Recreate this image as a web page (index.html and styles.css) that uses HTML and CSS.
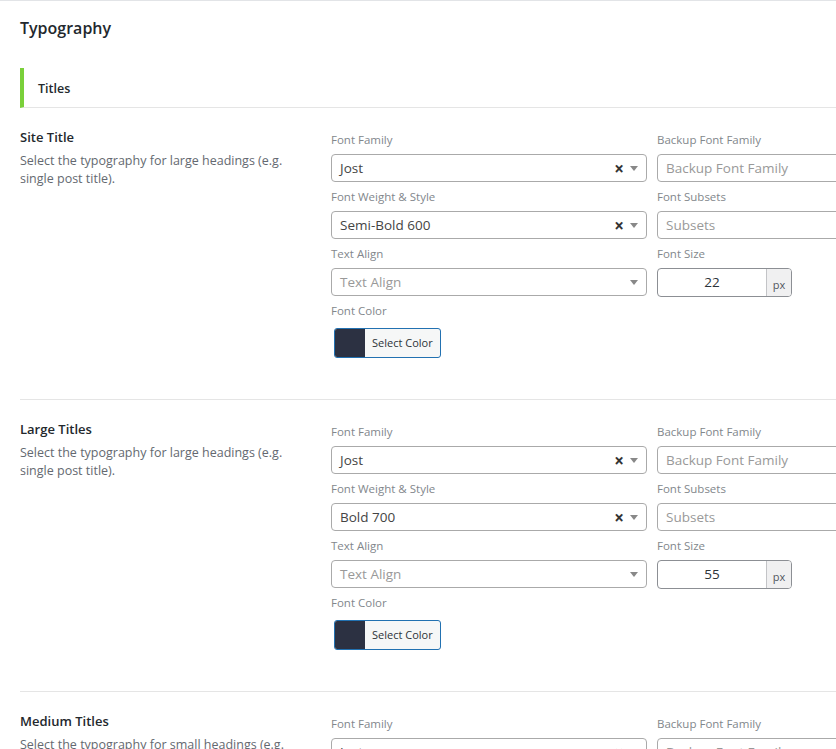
FILE: index.html
```html
<!DOCTYPE html>
<html lang="en">
<head>
<meta charset="UTF-8">
<meta name="viewport" content="width=device-width, initial-scale=1.0">
<title>Typography</title>
<link rel="stylesheet" href="styles.css">
</head>
<body>

<div class="page">
    <h2 class="page-title">Typography</h2>

    <div class="group-head">Titles</div>

    <div class="setting">
        <div class="setting-info">
            <h3>Site Title</h3>
            <p>Select the typography for large headings (e.g. single post title).</p>
        </div>
        <div class="setting-fields">
            <div class="field">
                <label>Font Family</label>
                <div class="select">
                    <span class="value">Jost</span>
                    <span class="clear">&times;</span>
                    <span class="arrow"></span>
                </div>
            </div>
            <div class="field">
                <label>Backup Font Family</label>
                <div class="select">
                    <span class="value placeholder">Backup Font Family</span>
                </div>
            </div>
            <div class="field">
                <label>Font Weight &amp; Style</label>
                <div class="select">
                    <span class="value">Semi-Bold 600</span>
                    <span class="clear">&times;</span>
                    <span class="arrow"></span>
                </div>
            </div>
            <div class="field">
                <label>Font Subsets</label>
                <div class="select">
                    <span class="value placeholder">Subsets</span>
                </div>
            </div>
            <div class="field">
                <label>Text Align</label>
                <div class="select">
                    <span class="value placeholder">Text Align</span>
                    <span class="arrow"></span>
                </div>
            </div>
            <div class="field field-size">
                <label>Font Size</label>
                <div class="size-input">
                    <span class="size-value">22</span>
                    <span class="unit">px</span>
                </div>
            </div>
            <div class="field field-color">
                <label>Font Color</label>
                <button type="button" class="color-btn">
                    <span class="swatch"></span>
                    <span class="color-text">Select Color</span>
                </button>
            </div>
        </div>
    </div>

    <div class="setting">
        <div class="setting-info">
            <h3>Large Titles</h3>
            <p>Select the typography for large headings (e.g. single post title).</p>
        </div>
        <div class="setting-fields">
            <div class="field">
                <label>Font Family</label>
                <div class="select">
                    <span class="value">Jost</span>
                    <span class="clear">&times;</span>
                    <span class="arrow"></span>
                </div>
            </div>
            <div class="field">
                <label>Backup Font Family</label>
                <div class="select">
                    <span class="value placeholder">Backup Font Family</span>
                </div>
            </div>
            <div class="field">
                <label>Font Weight &amp; Style</label>
                <div class="select">
                    <span class="value">Bold 700</span>
                    <span class="clear">&times;</span>
                    <span class="arrow"></span>
                </div>
            </div>
            <div class="field">
                <label>Font Subsets</label>
                <div class="select">
                    <span class="value placeholder">Subsets</span>
                </div>
            </div>
            <div class="field">
                <label>Text Align</label>
                <div class="select">
                    <span class="value placeholder">Text Align</span>
                    <span class="arrow"></span>
                </div>
            </div>
            <div class="field field-size">
                <label>Font Size</label>
                <div class="size-input">
                    <span class="size-value">55</span>
                    <span class="unit">px</span>
                </div>
            </div>
            <div class="field field-color">
                <label>Font Color</label>
                <button type="button" class="color-btn">
                    <span class="swatch"></span>
                    <span class="color-text">Select Color</span>
                </button>
            </div>
        </div>
    </div>

    <div class="setting">
        <div class="setting-info">
            <h3>Medium Titles</h3>
            <p>Select the typography for small headings (e.g. archive post titles).</p>
        </div>
        <div class="setting-fields">
            <div class="field">
                <label>Font Family</label>
                <div class="select">
                    <span class="value">Jost</span>
                    <span class="clear">&times;</span>
                    <span class="arrow"></span>
                </div>
            </div>
            <div class="field">
                <label>Backup Font Family</label>
                <div class="select">
                    <span class="value placeholder">Backup Font Family</span>
                </div>
            </div>
        </div>
    </div>
</div>

</body>
</html>
```

FILE: styles.css
```css
html, body {
    overflow: hidden;
}
body {
    font-family: "Open Sans", "Noto Sans", sans-serif;
    background-color: #fff;
    color: #23282d;
    margin: 0;
    padding: 0;
}
.page {
    width: 1100px;
    padding-left: 20px;
    border-top: 1px solid #e2e4e7;
}
.page-title {
    font-size: 16px;
    font-weight: 600;
    line-height: 22px;
    margin: 16px 0 29px;
}
.group-head {
    border-left: 4px solid #7ad03a;
    border-bottom: 1px solid #e5e5e5;
    height: 39px;
    line-height: 41px;
    padding-left: 14px;
    font-size: 12.5px;
    font-weight: 600;
}
.setting {
    display: flex;
    padding: 19px 0 35px;
    border-bottom: 1px solid #e5e5e5;
}
.setting-info {
    width: 290px;
    margin-right: 21px;
    flex-shrink: 0;
}
.setting-info h3 {
    font-size: 13px;
    font-weight: 600;
    line-height: 20px;
    margin: 0 0 5px;
}
.setting-info p {
    font-size: 12.5px;
    line-height: 18px;
    color: #646970;
    margin: 0;
}
.setting-fields {
    display: grid;
    grid-template-columns: 316px 316px;
    column-gap: 10px;
    align-items: start;
    margin-top: 4px;
}
.field {
    margin-bottom: 6px;
}
.field label {
    display: block;
    font-size: 11.5px;
    line-height: 18px;
    color: #82878c;
    margin-bottom: 5px;
}
.select {
    display: flex;
    align-items: center;
    height: 28px;
    box-sizing: border-box;
    border: 1px solid #aaa;
    border-radius: 4px;
    padding: 0 8px;
    background-color: #fff;
}
.select .value {
    flex: 1;
    font-size: 13.5px;
    color: #444;
}
.select .placeholder {
    color: #999;
}
.select .clear {
    font-size: 17px;
    font-weight: 700;
    line-height: 1;
    color: #333;
    margin-right: 6px;
}
.select .arrow {
    width: 0;
    height: 0;
    border-left: 4px solid transparent;
    border-right: 4px solid transparent;
    border-top: 5px solid #888;
}
.field-size {
    margin-bottom: 5px;
}
.size-input {
    display: flex;
    width: 135px;
    height: 29px;
    box-sizing: border-box;
    border: 1px solid #8c8f94;
    border-radius: 4px;
    overflow: hidden;
}
.size-value {
    flex: 1;
    text-align: center;
    font-size: 13.5px;
    line-height: 26px;
    color: #2c3338;
}
.unit {
    width: 24px;
    background-color: #f0f0f1;
    border-left: 1px solid #c3c4c7;
    font-size: 11px;
    line-height: 31px;
    text-align: center;
    color: #50575e;
}
.field-color label {
    margin-bottom: 8px;
}
.color-btn {
    display: flex;
    align-items: stretch;
    height: 30px;
    margin-left: 3px;
    padding: 0;
    border: 1px solid #2271b1;
    border-radius: 3px;
    background-color: #f6f7f7;
    overflow: hidden;
    cursor: pointer;
    font-family: inherit;
}
.swatch {
    width: 30px;
    background-color: #2c3142;
}
.color-text {
    padding: 0 7px;
    font-size: 11px;
    line-height: 28px;
    color: #2c3338;
}
```
